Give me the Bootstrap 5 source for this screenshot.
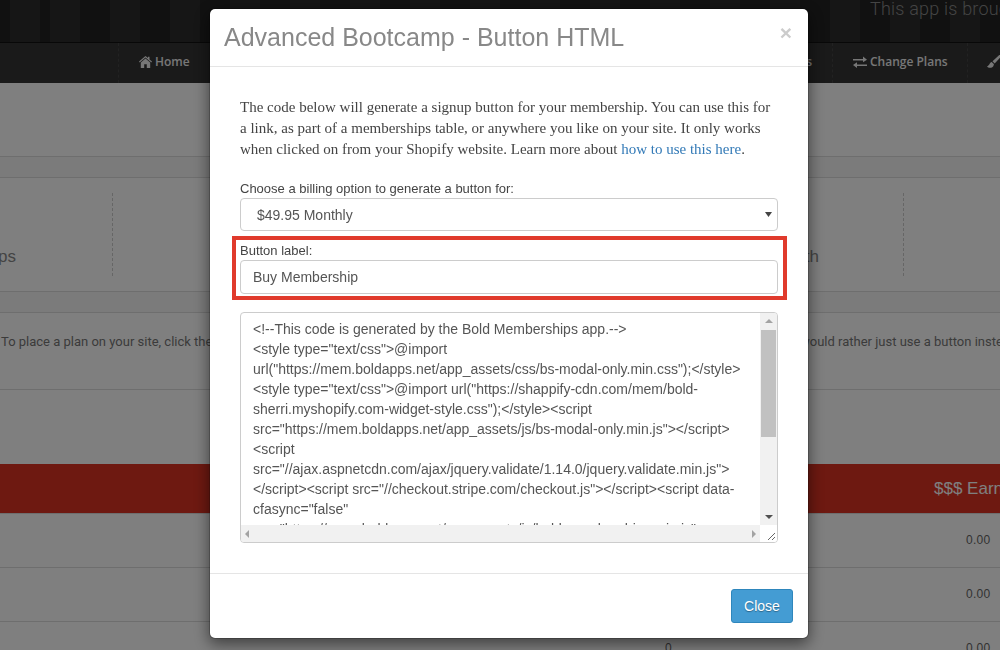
<!DOCTYPE html>
<html lang="en">
<head>
<meta charset="utf-8">
<title>Advanced Bootcamp - Button HTML</title>
<link href="https://cdn.jsdelivr.net/npm/bootstrap@5.3.0/dist/css/bootstrap.min.css" rel="stylesheet">
<style>
html, body { width: 1000px; height: 650px; overflow: hidden; background: #fff; font-family: "Liberation Sans", Arial, sans-serif; font-size: 12px; color: #777; }
.page-wrap { width: 1000px; height: 650px; overflow: hidden; }
.top-strip { height: 42px; background-color: #202020; background-image: repeating-linear-gradient(90deg, #2c2c2c 0, #2c2c2c 30px, #222 30px, #222 60px); background-position: 50px 0; justify-content: flex-end; font: 300 18px/18px Roboto, "Liberation Sans", sans-serif; color: #888; letter-spacing: .2px; }
.top-strip span { width: 130px; white-space: nowrap; }
.main-nav { height: 41px; background: #343434; border-top: 1px solid #111; font: 600 12px "Open Sans", "Liberation Sans", sans-serif; color: #eee; }
.nav-cell { border-left: 1px dashed #444; height: 100%; white-space: nowrap; flex: none; padding-bottom: 3px; }
.cell-home { margin-left: 118px; width: 200px; padding-left: 20px; }
.cell-members { width: 514px; justify-content: flex-end; padding-right: 20px; }
.cell-plans { width: 135px; padding-left: 20px; }
.cell-brush { padding-left: 19px; width: 33px; }
.nav-cell svg { fill: #eee; margin-right: 3px; flex: none; }
.plain-block { height: 74px; background: #fff; border-bottom: 1px solid #ddd; }
.thin-strip { height: 21px; background: #f7f7f7; border-bottom: 1px solid #ddd; }
.stat-row { height: 114px; background: #fff; border-bottom: 1px solid #ddd; padding: 15px 0; font-size: 17px; color: #888; }
.stat-cell { height: 83px; padding-bottom: 7px; white-space: nowrap; }
.stat-a { width: 113px; justify-content: flex-end; padding-right: 96px; border-right: 1px dashed #ccc; }
.stat-b { width: 706px; justify-content: flex-end; }
.stat-c { width: 85px; border-right: 1px dashed #ccc; }
.note-row { height: 77px; background: #fff; border-bottom: 1px solid #ddd; padding: 21px 0 0 1px; white-space: nowrap; font: 13px Roboto, "Liberation Sans", sans-serif; color: #777; }
.note-left { width: 799px; flex: none; }
.gap-block { height: 74px; background: #fff; }
.red-band { height: 50px; background: #dc3222; color: #fff; font-size: 17px; padding-left: 934px; white-space: nowrap; border-bottom: 1px solid #ddd; }
.data-row { height: 54px; background: #fff; border-bottom: 1px solid #ddd; color: #666; font-size: 12px; letter-spacing: .3px; padding-bottom: 2px; }
.data-a { width: 665px; flex: none; }
.data-b { width: 301px; flex: none; }
.modal-frame { max-width: 600px; width: 600px; margin: 8px 0 0 209px; }
.modal-shell { height: 631px; border-radius: 6px; border: 1px solid rgba(0,0,0,.2); box-shadow: 0 5px 15px rgba(0,0,0,.5); }
.modal-top { height: 58px; flex: none; padding: 0 16px 0 14px; border-bottom: 1px solid #e5e5e5; align-items: center; }
.modal-top h5 { font-size: 25px; font-weight: 400; color: #888; margin: 0; line-height: 1; }
.x-btn { background: none; border: 0; padding: 0; color: #ccc; font-size: 21px; font-weight: 700; line-height: 1; margin-top: -11px; }
.modal-mid { padding: 30px 30px 0; flex: 1; }
.intro-text { font: 15px/21px "Liberation Serif", "Times New Roman", serif; color: #444; margin: 0 0 22px; width: 538px; }
.intro-text a { color: #337ab7; text-decoration: none; }
.fld-label { font-size: 13px; line-height: 14px; color: #444; margin: 0 0 2px; display: block; }
.sel-box { height: 33px; padding: 1px 12px 0 16px; font-size: 14px; color: #555; border-color: #ccc; border-radius: 4px; background-size: 7px 5px; background-position: right 5px center; background-image: url("data:image/svg+xml,%3Csvg xmlns='http://www.w3.org/2000/svg' viewBox='0 0 7 5'%3E%3Cpath d='M0 0h7L3.500 5z' fill='%23444'/%3E%3C/svg%3E"); width: 538px; }
.red-frame { border: 4px solid #e03a2c; width: 555px; height: 64px; margin: 5px 0 12px -8px; padding: 4px 5px 0 4px; }
.txt-box { height: 34px; padding: 0 12px; font-size: 14px; color: #555; border-color: #ccc; border-radius: 4px; }
.code-box { width: 538px; height: 231px; border: 1px solid #ccc; border-radius: 4px; overflow: hidden; display: grid; grid-template-columns: 1fr 17px; grid-template-rows: 1fr 17px; }
.code-text { padding: 6px 0 0 12px; font-size: 14px; line-height: 20px; color: #555; overflow: hidden; word-break: break-word; }
.bar-v { background: #f1f1f1; align-items: center; }
.bar-thumb-v { width: 15px; height: 107px; background: #c1c1c1; margin-top: 7px; }
.bar-h { background: #f1f1f1; align-items: center; padding: 0 4px; }
.arr { width: 0; height: 0; border-style: solid; flex: none; }
.arr-up { border-width: 0 4px 4px; border-color: transparent transparent #a3a3a3; margin-top: 6px; }
.arr-down { border-width: 4px 4px 0; border-color: #505050 transparent transparent; margin-bottom: 6px; }
.arr-left { border-width: 4px 4px 4px 0; border-color: transparent #a3a3a3 transparent transparent; }
.arr-right { border-width: 4px 0 4px 4px; border-color: transparent transparent transparent #a3a3a3; }
.corner-grip { background: #fff; }
.modal-end { height: 65px; flex: none; border-top: 1px solid #e5e5e5; padding: 15px 15px 0 0; }
.close-btn { width: 62px; height: 34px; padding: 0; background: #449cd3; border: 1px solid #2e86bc; border-radius: 3px; color: #fff; font-size: 14px; text-shadow: 0 1px 1px rgba(0,0,0,.35); }
</style>
</head>
<body>
<div class="page-wrap">
  <div class="top-strip d-flex align-items-start"><span>This app is brought to you by Bold</span></div>
  <nav class="main-nav d-flex align-items-center">
    <div class="nav-cell cell-home d-flex align-items-center">
      <svg width="13" height="12" viewBox="0 0 13 12"><path d="M6.500 0 0 5.600l.7.800L6.500 1.500l5.800 4.900.7-.8L10.500 3.400V.8H9v1.300zM1.800 6.500V12h3.400V8.300h2.600V12h3.400V6.500L6.500 2.600z"/></svg>Home
    </div>
    <div class="nav-cell cell-members d-flex align-items-center">Members</div>
    <div class="nav-cell cell-plans d-flex align-items-center">
      <svg width="14" height="12" viewBox="0 0 14 12"><path d="M0 3h10V.6L14 3.700 10 6.200V4.600H0zM14 8.500H4V6.200L0 9l4 3V10h10z"/></svg>Change Plans
    </div>
    <div class="nav-cell cell-brush d-flex align-items-center">
      <svg width="14" height="14" viewBox="0 0 14 14"><path d="M13.500.3c-.4-.4-1-.4-1.500 0L5.500 6.300 7.700 8.500l6-6.500c.4-.5.200-1.300-.2-1.700zM4.700 7C2.500 7.300 2.800 10.500 0 11.400c1.200 1.800 5.500 2.600 6.800-1.500.1-.4.100-.8 0-1z"/></svg>
    </div>
  </nav>
  <div class="plain-block"></div>
  <div class="thin-strip"></div>
  <div class="stat-row d-flex">
    <div class="stat-cell stat-a d-flex align-items-end">Memberships</div>
    <div class="stat-cell stat-b d-flex align-items-end">This Month</div>
    <div class="stat-cell stat-c"></div>
  </div>
  <div class="thin-strip"></div>
  <div class="note-row d-flex">
    <div class="note-left">To place a plan on your site, click the</div>
    <div>would rather just use a button instead</div>
  </div>
  <div class="gap-block"></div>
  <div class="red-band d-flex align-items-center">$$$ Earned</div>
  <div class="data-row d-flex align-items-center"><div class="data-a"></div><div class="data-b">0</div><div>0.00</div></div>
  <div class="data-row d-flex align-items-center"><div class="data-a"></div><div class="data-b">0</div><div>0.00</div></div>
  <div class="data-row d-flex align-items-center"><div class="data-a"></div><div class="data-b">0</div><div>0.00</div></div>
</div>

<div class="modal-backdrop show"></div>
<div class="modal d-block" tabindex="-1" role="dialog">
  <div class="modal-dialog modal-frame">
    <div class="modal-content modal-shell">
      <div class="modal-top d-flex justify-content-between">
        <h5>Advanced Bootcamp - Button HTML</h5>
        <button type="button" class="x-btn" aria-label="Close">×</button>
      </div>
      <div class="modal-mid">
        <p class="intro-text">The code below will generate a signup button for your membership. You can use this for a link, as part of a memberships table, or anywhere you like on your site. It only works when clicked on from your Shopify website. Learn more about <a href="#">how to use this here</a>.</p>
        <label class="fld-label">Choose a billing option to generate a button for:</label>
        <select class="form-select sel-box"><option>$49.95 Monthly</option></select>
        <div class="red-frame">
          <label class="fld-label">Button label:</label>
          <input class="form-control txt-box" type="text" value="Buy Membership">
        </div>
        <div class="code-box">
          <div class="code-text">&lt;!--This code is generated by the Bold Memberships app.--&gt;<br>&lt;style type="text/css"&gt;@import<br>url("https://mem.boldapps.net/app_assets/css/bs-modal-only.min.css");&lt;/style&gt;<br>&lt;style type="text/css"&gt;@import url("https://shappify-cdn.com/mem/bold-<br>sherri.myshopify.com-widget-style.css");&lt;/style&gt;&lt;script<br>src="https://mem.boldapps.net/app_assets/js/bs-modal-only.min.js"&gt;&lt;/script&gt;<br>&lt;script<br>src="//ajax.aspnetcdn.com/ajax/jquery.validate/1.14.0/jquery.validate.min.js"&gt;<br>&lt;/script&gt;&lt;script src="//checkout.stripe.com/checkout.js"&gt;&lt;/script&gt;&lt;script data-<br>cfasync="false"<br>src="https://mem.boldapps.net/app_assets/js/bold-memberships.min.js"&gt;</div>
          <div class="bar-v d-flex flex-column justify-content-between">
            <div class="d-flex flex-column align-items-center"><span class="arr arr-up"></span><div class="bar-thumb-v"></div></div>
            <span class="arr arr-down"></span>
          </div>
          <div class="bar-h d-flex justify-content-between"><span class="arr arr-left"></span><span class="arr arr-right"></span></div>
          <div class="corner-grip d-flex"><svg width="17" height="17" viewBox="0 0 17 17"><path d="M8 15 15 8M12 15l3-3" stroke="#666" stroke-width="1" fill="none"/></svg></div>
        </div>
      </div>
      <div class="modal-end d-flex justify-content-end align-items-start">
        <button type="button" class="btn close-btn">Close</button>
      </div>
    </div>
  </div>
</div>
<script src="https://cdn.jsdelivr.net/npm/bootstrap@5.3.0/dist/js/bootstrap.bundle.min.js"></script>
</body>
</html>
